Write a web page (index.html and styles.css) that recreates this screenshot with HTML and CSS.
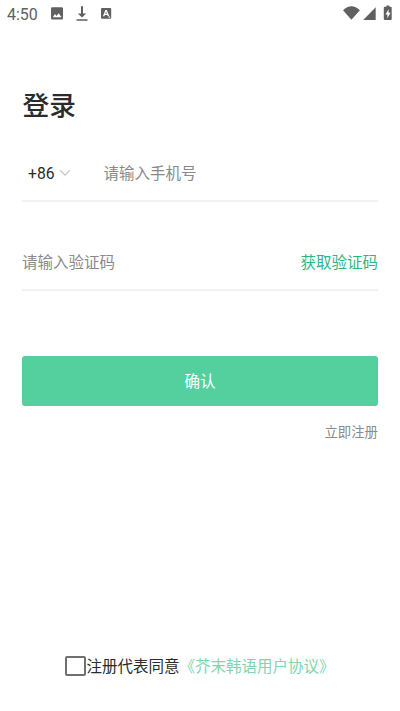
FILE: index.html
```html
<!DOCTYPE html>
<html lang="zh-CN">
<head>
<meta charset="utf-8">
<title>登录</title>
<link rel="stylesheet" href="styles.css">
</head>
<body>
<div class="screen">
  <header class="status">
    <span class="time">4:50</span>
    <svg class="notes" width="66" height="28" viewBox="0 0 66 28" fill="#606060">
      <path fill-rule="evenodd" d="M2.300 7.200h9.400q1.300 0 1.300 1.300v9.700q0 1.300-1.300 1.300H2.300Q1 19.500 1 18.200V8.500Q1 7.200 2.300 7.200zM2.800 17.200h8.800l-2.900-4-2.200 2.800-1.500-1.900z"/>
      <path d="M31 6.300h2v7.200h3.200L32 17.500l-4.200-4H31zM26.500 19.300h11v1.500h-11z"/>
      <path fill-rule="evenodd" d="M52 8h8.200q1 0 1 1v8.800q0 1-1 1H52q-1 0-1-1V9q0-1 1-1zM55.400 10l-2.500 6.300h1.500l.5-1.300h2.400l.5 1.300h1.500L56.800 10zm.7 1.700.8 2.100h-1.600zM58.800 16.500h1.200v1.200h-1.200z"/>
    </svg>
    <svg class="system" width="52" height="28" viewBox="0 0 52 28" fill="#606060">
      <path d="M0 10.200Q8.400 2.200 16.900 10.200L8.400 19.800z"/>
      <path d="M32.700 7.300V20H20.200z"/>
      <path fill-rule="evenodd" d="M43.400 5.500h3v1.300h1.300q1 0 1 1V19q0 1-1 1h-5.900q-1 0-1-1V7.800q0-1 1-1h1.600zM45.600 9.200l-3.100 5.200h1.900v3.800l3.100-5.400h-1.900z"/>
    </svg>
  </header>
  <main class="content">
    <h1 class="title">登录</h1>
    <div class="field phone">
      <span class="code">+86</span>
      <svg class="chevron" width="12" height="8" viewBox="0 0 12 8" fill="none" stroke="#c4c4c4" stroke-width="1.200"><path d="M1 1.200l5 5 5-5"/></svg>
      <span class="placeholder">请输入手机号</span>
    </div>
    <div class="field verify">
      <span class="placeholder">请输入验证码</span>
      <span class="send">获取验证码</span>
    </div>
    <button class="submit">确认</button>
    <a class="register">立即注册</a>
  </main>
  <footer class="agreement">
    <span class="checkbox"></span>
    <span class="consent">注册代表同意<span class="terms">《芥末韩语用户协议》</span></span>
  </footer>
</div>
</body>
</html>
```

FILE: styles.css
```css
* { box-sizing: border-box; }

body {
  margin: 0;
  background: #fff;
  color: #2b2b2b;
  font-family: Roboto, "Noto Sans CJK SC", sans-serif;
  font-size: 15.5px;
}

.screen {
  height: 711px;
  display: flex;
  flex-direction: column;
  overflow: hidden;
}

.status {
  height: 28px;
  display: flex;
  align-items: center;
  padding: 0 5px 0 7px;
  color: #606060;
}

.time {
  width: 43px;
  padding-top: 1px;
  font-size: 16px;
  line-height: 27px;
}

.system { margin-left: auto; }

.content {
  display: flex;
  flex-direction: column;
  padding: 0 22px;
}

.title {
  margin: 58px 0 0 0.500px;
  height: 40px;
  font-size: 26.7px;
  font-weight: 500;
  line-height: 40px;
}

.field {
  display: flex;
  align-items: center;
  border-bottom: 2px solid #f2f2f2;
}

.phone {
  height: 56px;
  margin-top: 20px;
  padding-left: 6px;
}

.code {
  width: 31px;
  padding-top: 1px;
  font-size: 15.7px;
}

.chevron { margin-right: 32.500px; }

.placeholder,
.send { padding-bottom: 2px; }

.placeholder { color: #8a8a8a; }

.verify {
  height: 57px;
  margin-top: 32px;
  justify-content: space-between;
}

.send { color: #2eb583; }

.submit {
  height: 50px;
  margin-top: 65px;
  padding: 0 0 2px;
  border: 0;
  border-radius: 3px;
  background: #54d09f;
  color: #fff;
  font: inherit;
}

.register {
  align-self: flex-end;
  margin-top: 17px;
  color: #8a8a8a;
  font-size: 13.4px;
  line-height: 20px;
}

.agreement {
  display: flex;
  align-items: center;
  height: 30px;
  margin: auto 0 30px 65px;
}

.consent { padding-bottom: 2px; }

.checkbox {
  width: 21px;
  height: 20px;
  margin-right: 0.500px;
  border: 2px solid #707070;
  border-radius: 2px;
}

.terms { color: #7dd5b1; }
```
